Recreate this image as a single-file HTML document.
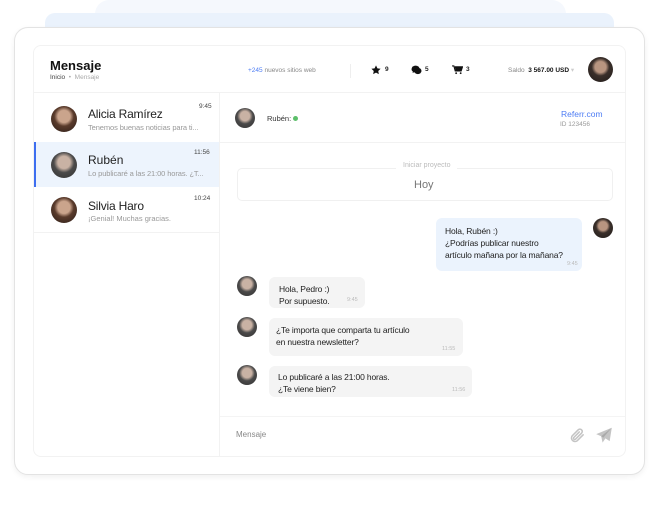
<!DOCTYPE html>
<html><head><meta charset="utf-8"><style>
*{margin:0;padding:0;box-sizing:border-box}
body{width:660px;height:523px;background:#fff;font-family:"Liberation Sans",sans-serif;position:relative;overflow:hidden;color:#222}
.a{position:absolute;white-space:nowrap}
.av{position:absolute;border-radius:50%;background:radial-gradient(circle at 50% 40%,#b89580 0 28%,#3a2f2a 45%,#1e1a18 100%)}
.avw{background:radial-gradient(circle at 50% 40%,#caa48c 0 30%,#5a3b2c 48%,#2a1d18 100%)}
.avm{background:radial-gradient(circle at 50% 40%,#c9b2a4 0 30%,#4b4a4a 50%,#303030 100%)}
.bub{position:absolute;border-radius:6px;font-size:8.5px;line-height:12px;color:#222;padding:0 9px;letter-spacing:-0.15px;white-space:nowrap}
.tm{position:absolute;font-size:5.5px;color:#bbb}
</style></head><body>
<div class="a" style="left:95px;top:0;width:471px;height:14px;background:#f5f8fd;border-top-left-radius:14px;border-top-right-radius:14px"></div>
<div class="a" style="left:45px;top:13px;width:569px;height:20px;background:#eaf2fc;border-radius:10px 10px 0 0"></div>
<div class="a" style="left:14px;top:27px;width:631px;height:448px;background:#fff;border:1px solid #e3e3e3;border-radius:14px;box-shadow:0 2px 6px rgba(0,0,0,.06)"></div>
<div class="a" style="left:33px;top:45px;width:593px;height:412px;border:1px solid #f2f2f2;border-radius:8px;background:#fff"></div>
<div class="a" style="left:50px;top:58px;font-size:13px;font-weight:bold;color:#111">Mensaje</div>
<div class="a" style="left:50px;top:74px;font-size:6.5px;color:#444">Inicio <span style="color:#aaa">&nbsp;•&nbsp; Mensaje</span></div>
<div class="a" style="left:248px;top:67px;font-size:6.5px;color:#888"><span style="color:#4d7cf4">+245</span> nuevos sitios web</div>
<div class="a" style="left:350px;top:64px;width:1px;height:14px;background:#eee"></div>
<svg class="a" style="left:371px;top:65px" width="10" height="10" viewBox="0 0 24 24"><path d="M12 1l3.4 7 7.6 1-5.6 5.3 1.4 7.7L12 18.3 5.2 22l1.4-7.7L1 9l7.6-1z" fill="#111"/></svg>
<div class="a" style="left:385px;top:66px;font-size:6.5px;font-weight:bold">9</div>
<svg class="a" style="left:411px;top:65px" width="11" height="10" viewBox="0 0 24 22"><ellipse cx="10" cy="9" rx="9" ry="7.5" fill="#111"/><ellipse cx="15" cy="13" rx="8" ry="7" fill="#111"/><path d="M3 17l2-4 3 3z" fill="#111"/></svg>
<div class="a" style="left:425px;top:66px;font-size:6.5px;font-weight:bold">5</div>
<svg class="a" style="left:452px;top:65px" width="11" height="10" viewBox="0 0 24 22"><path d="M0 2h4l3 11h13l3-9H6" fill="none" stroke="#111" stroke-width="2.5"/><path d="M6 4h17l-3 9H8z" fill="#111"/><circle cx="9" cy="18" r="2" fill="#111"/><circle cx="19" cy="18" r="2" fill="#111"/></svg>
<div class="a" style="left:466px;top:66px;font-size:6.5px;font-weight:bold">3</div>
<div class="a" style="left:508px;top:66px;font-size:6.5px;color:#888">Saldo &nbsp;<b style="color:#111">3 567.00 USD</b> <span style="color:#ccc">▾</span></div>
<div class="av" style="left:588px;top:57px;width:25px;height:25px"></div>
<div class="a" style="left:34px;top:92px;width:591px;height:1px;background:#f2f2f2"></div>
<div class="a" style="left:219px;top:92px;width:1px;height:364px;background:#f2f2f2"></div>
<div class="av avw" style="left:51px;top:106px;width:26px;height:26px"></div>
<div class="a" style="left:88px;top:107px;font-size:12px;color:#222;letter-spacing:-0.2px">Alicia Ramírez</div>
<div class="a" style="left:88px;top:123px;font-size:7.5px;color:#999;letter-spacing:-0.1px">Tenemos buenas noticias para ti...</div>
<div class="a" style="left:199px;top:103px;font-size:6.5px;color:#444">9:45</div>
<div class="a" style="left:34px;top:142px;width:185px;height:1px;background:#f2f2f2"></div>
<div class="a" style="left:34px;top:142px;width:185px;height:45px;background:#edf4fd;border-left:2px solid #3d6ef0"></div>
<div class="av avm" style="left:51px;top:152px;width:26px;height:26px"></div>
<div class="a" style="left:88px;top:153px;font-size:12px">Rubén</div>
<div class="a" style="left:88px;top:169px;font-size:7.5px;color:#999;letter-spacing:-0.1px">Lo publicaré a las 21:00 horas. ¿T...</div>
<div class="a" style="left:194px;top:149px;font-size:6.5px;color:#444">11:56</div>
<div class="av avw" style="left:51px;top:197px;width:26px;height:26px"></div>
<div class="a" style="left:88px;top:199px;font-size:12px;letter-spacing:-0.2px">Silvia Haro</div>
<div class="a" style="left:88px;top:214px;font-size:7.5px;color:#999">¡Genial! Muchas gracias.</div>
<div class="a" style="left:194px;top:195px;font-size:6.5px;color:#444">10:24</div>
<div class="a" style="left:34px;top:232px;width:185px;height:1px;background:#f2f2f2"></div>
<div class="av avm" style="left:235px;top:108px;width:20px;height:20px"></div>
<div class="a" style="left:267px;top:114px;font-size:7.5px;color:#333">Rubén: <span style="display:inline-block;width:5px;height:5px;border-radius:50%;background:#5cbf6a"></span></div>
<div class="a" style="left:561px;top:109px;font-size:8.5px;color:#4d7cf4">Referr.com</div>
<div class="a" style="left:560px;top:121px;font-size:6.5px;color:#999">ID 123456</div>
<div class="a" style="left:220px;top:142px;width:405px;height:1px;background:#f2f2f2"></div>
<div class="a" style="left:237px;top:168px;width:376px;height:33px;border:1px solid #f0f0f0;border-radius:5px"></div>
<div class="a" style="left:396px;top:162px;font-size:7px;color:#bbb;background:#fff;padding:0 7px">Iniciar proyecto</div>
<div class="a" style="left:414px;top:179px;font-size:11px;color:#777">Hoy</div>
<div class="av" style="left:593px;top:218px;width:20px;height:20px"></div>
<div class="bub" style="left:436px;top:218px;width:146px;height:53px;background:#ebf3fd;padding-top:7px">Hola, Rubén :)<br>¿Podrías publicar nuestro<br>artículo mañana por la mañana?</div>
<div class="tm" style="left:567px;top:261px">9:45</div>
<div class="av avm" style="left:237px;top:276px;width:20px;height:20px"></div>
<div class="bub" style="left:269px;top:277px;width:96px;height:31px;background:#f4f4f4;padding-top:6px;padding-left:10px">Hola, Pedro :)<br>Por supuesto.</div>
<div class="tm" style="left:347px;top:297px">9:45</div>
<div class="av avm" style="left:237px;top:317px;width:20px;height:20px"></div>
<div class="bub" style="left:269px;top:318px;width:194px;height:38px;background:#f4f4f4;padding-top:6px;padding-left:7px">¿Te importa que comparta tu artículo<br>en nuestra newsletter?</div>
<div class="tm" style="left:442px;top:346px">11:55</div>
<div class="av avm" style="left:237px;top:365px;width:20px;height:20px"></div>
<div class="bub" style="left:269px;top:366px;width:203px;height:31px;background:#f4f4f4;padding-top:5px">Lo publicaré a las 21:00 horas.<br>¿Te viene bien?</div>
<div class="tm" style="left:452px;top:387px">11:56</div>
<div class="a" style="left:220px;top:416px;width:405px;height:1px;background:#f4f4f4"></div>
<div class="a" style="left:236px;top:430px;font-size:8px;color:#888">Mensaje</div>
<svg class="a" style="left:569px;top:427px" width="17" height="17" viewBox="0 0 24 24" fill="none" stroke="#c4c4c4" stroke-width="2.2" stroke-linecap="round"><path d="M20 11l-8.5 8.5a5 5 0 0 1-7-7L13 4a3.3 3.3 0 0 1 4.7 4.7L9.2 17.2a1.7 1.7 0 0 1-2.4-2.4L14.5 7"/></svg>
<svg class="a" style="left:595px;top:427px" width="18" height="17" viewBox="0 0 24 24"><path d="M23 1L1 10l7 3 2 9 4-6 6 4z" fill="#c4c4c4"/><path d="M8 13L23 1 11 15" fill="#a9a9a9"/></svg>
</body></html>
